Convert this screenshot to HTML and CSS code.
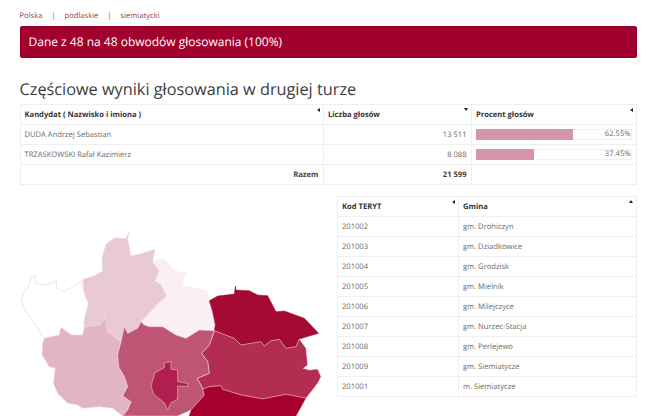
FILE: index.html
```html
<!DOCTYPE html>
<html lang="pl">
<head>
    <meta charset="UTF-8">
    <title>Wyniki głosowania</title>
    <link rel="stylesheet" href="styles.css">
</head>
<body>

<nav class="crumbs">
    <a>Polska</a><span class="sep">|</span><a>podlaskie</a><span class="sep">|</span><a>siemiatycki</a>
</nav>

<div class="alert">Dane z 48 na 48 obwodów głosowania (100%)</div>

<h2>Częściowe wyniki głosowania w drugiej turze</h2>

<table class="results">
    <thead>
        <tr>
            <th class="col-name">Kandydat ( Nazwisko i imiona )<i class="sort left"></i></th>
            <th class="col-votes">Liczba głosów<i class="sort down"></i></th>
            <th>Procent głosów<i class="sort left"></i></th>
        </tr>
    </thead>
    <tbody>
        <tr>
            <td>DUDA Andrzej Sebastian</td>
            <td class="num">13 511</td>
            <td class="bar-cell"><div class="bar"><div class="fill" style="width: 62.55%"></div><span>62.55%</span></div></td>
        </tr>
        <tr>
            <td>TRZASKOWSKI Rafał Kazimierz</td>
            <td class="num">8 088</td>
            <td class="bar-cell"><div class="bar"><div class="fill" style="width: 37.45%"></div><span>37.45%</span></div></td>
        </tr>
        <tr>
            <td class="num total">Razem</td>
            <td class="num total">21 599</td>
            <td></td>
        </tr>
    </tbody>
</table>

<div class="lower">
    <div class="map">
        <svg width="318" height="200" viewBox="57 0 954 600">
            <g stroke="#f3dfe6" stroke-width="1.5" stroke-linejoin="round">
                <path fill="#fff" stroke="#e2e2e2" stroke-width="2.5" d="M103 177 100 197 120 207 150 202 165 192 167 217 190 227 240 197 250 232 263 262 250 312 250 340 245 357 210 357 195 345 180 334 175 357 130 367 100 322 75 287 60 252 70 227 85 207 90 187Z"/>
                <path fill="#e9c9d4" stroke="#ecd6de" d="M385 47 375 68 340 65 315 85 303 125 305 165 280 180 245 190 250 232 263 262 250 312 250 332 270 330 295 327 310 312 313 292 317 327 320 347 360 377 370 332 380 352 410 337 420 317 470 265 497 240 480 205 462 195 475 165 455 135 462 100 425 112 390 120 380 70Z"/>
                <path fill="#faf0f4" stroke="#ebe3e6" d="M455 135 490 130 520 165 555 172 540 207 615 224 625 254 635 287 643 327 640 344 595 342 555 367 510 347 485 332 445 332 430 327 420 317 470 265 497 240 480 205 462 195 475 165Z"/>
                <path fill="#e3b4c3" d="M130 367 175 357 180 334 195 345 210 357 245 357 250 332 270 330 295 327 310 312 313 292 317 327 320 347 360 377 350 417 353 452 370 482 380 512 365 540 390 557 380 582 365 600 335 577 295 572 245 577 230 567 200 562 170 532 157 502 163 457 145 452 123 417 125 382Z"/>
                <path fill="#a50a35" stroke="#a50a35" d="M703 210 705 222 745 224 770 237 800 239 825 287 850 285 910 307 953 352 895 369 885 392 855 397 835 370 810 374 790 390 780 377 720 387 700 367 640 344 643 327 635 287 625 254 650 240 700 234Z"/>
                <path fill="#b32c52" d="M640 344 700 367 720 387 780 377 790 390 810 374 835 370 855 397 885 392 895 369 915 397 920 447 907 457 925 462 950 459 960 482 950 502 915 547 855 535 785 549 720 537 665 520 660 509 625 512 605 520 600 507 588 487 625 472 620 437 602 412 625 387Z"/>
                <path fill="#bf5474" d="M370 332 380 352 410 337 420 317 430 327 445 332 485 332 525 357 555 367 595 342 640 344 625 387 602 412 620 437 625 472 588 487 600 507 605 520 610 537 570 582 530 600 390 600 365 600 380 582 390 557 365 540 380 512 370 482 353 452 350 417 360 377Z"/>
                <path fill="#b01f4d" d="M510 437 490 440 490 455 462 470 450 510 458 535 490 560 500 582 510 560 530 550 530 510 560 512 560 502 530 497 530 462 510 460Z"/>
                <path fill="#a8002e" stroke="#e3a0b4" d="M605 520 625 512 660 509 665 520 720 537 785 549 855 535 915 547 880 610 560 610 570 582 610 537Z"/>
            </g>
        </svg>
    </div>

    <table class="units">
        <thead>
            <tr>
                <th class="col-code">Kod TERYT<i class="sort left"></i></th>
                <th>Gmina<i class="sort up"></i></th>
            </tr>
        </thead>
        <tbody>
            <tr><td>201002</td><td>gm. Drohiczyn</td></tr>
            <tr><td>201003</td><td>gm. Dziadkowice</td></tr>
            <tr><td>201004</td><td>gm. Grodzisk</td></tr>
            <tr><td>201005</td><td>gm. Mielnik</td></tr>
            <tr><td>201006</td><td>gm. Milejczyce</td></tr>
            <tr><td>201007</td><td>gm. Nurzec-Stacja</td></tr>
            <tr><td>201008</td><td>gm. Perlejewo</td></tr>
            <tr><td>201009</td><td>gm. Siemiatycze</td></tr>
            <tr><td>201001</td><td>m. Siemiatycze</td></tr>
        </tbody>
    </table>
</div>

</body>
</html>
```

FILE: styles.css
```css
body {
    margin: 0;
    padding: 10px 27px 0 19.5px;
    font-family: "Open Sans", sans-serif;
    font-size: 7.6px;
    color: #6a6a6a;
    background: #fff;
    overflow: hidden;
    text-rendering: geometricPrecision;
}
.crumbs {
    height: 16px;
    line-height: 12px;
    color: #8d3a55;
}
.sep {
    margin: 0 9px;
}
.alert {
    box-sizing: border-box;
    height: 32px;
    line-height: 30px;
    padding-left: 8px;
    background: #a2002f;
    border: 1px solid #94002b;
    border-radius: 2px;
    color: #fff;
    font-size: 12px;
}
h2 {
    margin: 20px 0 3px;
    height: 23px;
    line-height: 23px;
    font-size: 16.3px;
    font-weight: 400;
    color: #3c3c3c;
}
table {
    border-collapse: collapse;
    table-layout: fixed;
    width: 100%;
}
th, td {
    height: 19px;
    padding: 0 4.5px 0 4px;
    border: 1px solid #efefef;
    text-align: left;
    white-space: nowrap;
}
th {
    position: relative;
    font-weight: 700;
    color: #333;
}
.col-name {
    width: 294px;
}
.col-votes {
    width: 138.5px;
}
.num {
    text-align: right;
}
.total {
    font-weight: 700;
    color: #444;
}
.bar {
    position: relative;
    height: 11px;
    line-height: 11px;
    box-shadow: inset 0 0 0 1px #efefef;
}
.bar span {
    position: absolute;
    right: 1px;
    top: 0;
}
.fill {
    height: 100%;
    background: #d795a9;
}
.sort {
    position: absolute;
    top: 3px;
    right: 3px;
    width: 0;
    height: 0;
    border-style: solid;
    border-color: transparent;
}
.sort.left {
    border-width: 2px 3px 2px 0;
    border-right-color: #222;
}
.sort.down {
    border-width: 3px 2px 0;
    border-top-color: #222;
}
.sort.up {
    border-width: 0 2px 3px;
    border-bottom-color: #222;
}
.lower {
    display: flex;
    margin-top: 11px;
}
.map {
    flex: none;
    width: 317.5px;
    padding-top: 20px;
}
.map svg {
    display: block;
}
.units {
    flex: 1;
    height: 201px;
}
.col-code {
    width: 111.5px;
}
```
